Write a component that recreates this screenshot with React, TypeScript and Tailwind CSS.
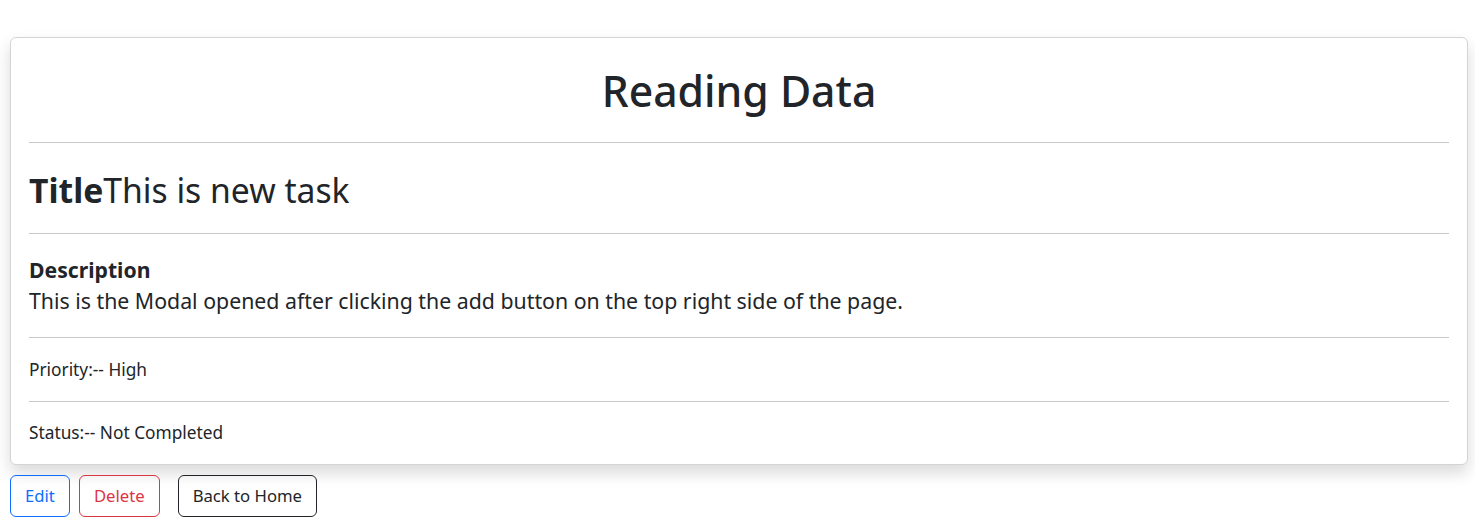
const font = { fontFamily: '"Noto Sans", "Open Sans", Arial, sans-serif' };

export default function App() {
  return (
    <div className="min-h-screen bg-white pt-[37px] text-[#212529]" style={font}>
      <div className="ml-[10px] w-[1458px] rounded-[6px] border border-[#d3d4d5] bg-white px-[18px] shadow-[0_8px_16px_rgba(0,0,0,0.15)]">
        <div className="flex h-[104px] items-center justify-center pt-[2px]">
          <h1 className="text-[42.7px] font-medium leading-none">Reading Data</h1>
        </div>
        <hr className="border-0 border-t border-[#c8c9ca]" />
        <div className="flex h-[90px] items-center pt-[6px]">
          <h2 className="text-[33.7px] leading-none">
            <span className="font-bold">Title</span>This is new task
          </h2>
        </div>
        <hr className="border-0 border-t border-[#c8c9ca]" />
        <div className="flex h-[103px] flex-col justify-center pb-[2px]">
          <h5 className="text-[21.2px] font-bold leading-[31px]">Description</h5>
          <p className="text-[21.3px] leading-[31px]">
            This is the Modal opened after clicking the add button on the top right side of the page.
          </p>
        </div>
        <hr className="border-0 border-t border-[#c8c9ca]" />
        <div className="flex h-[63px] items-center">
          <p className="text-[17.3px]">Priority:-- High</p>
        </div>
        <hr className="border-0 border-t border-[#c8c9ca]" />
        <div className="flex h-[62px] items-center">
          <p className="text-[17.3px]">Status:-- Not Completed</p>
        </div>
      </div>
      <div className="ml-[10px] mt-[10px] flex items-center">
        <button className="h-[42px] rounded-[6px] border border-[#0d6efd] px-[14px] text-[16.7px] text-[#0d6efd]">
          Edit
        </button>
        <button className="ml-[9px] h-[42px] rounded-[6px] border border-[#dc3545] px-[14px] text-[16.7px] text-[#dc3545]">
          Delete
        </button>
        <button className="ml-[18px] h-[42px] rounded-[6px] border border-[#212529] px-[14px] text-[16.7px] text-[#212529]">
          Back to Home
        </button>
      </div>
    </div>
  );
}
